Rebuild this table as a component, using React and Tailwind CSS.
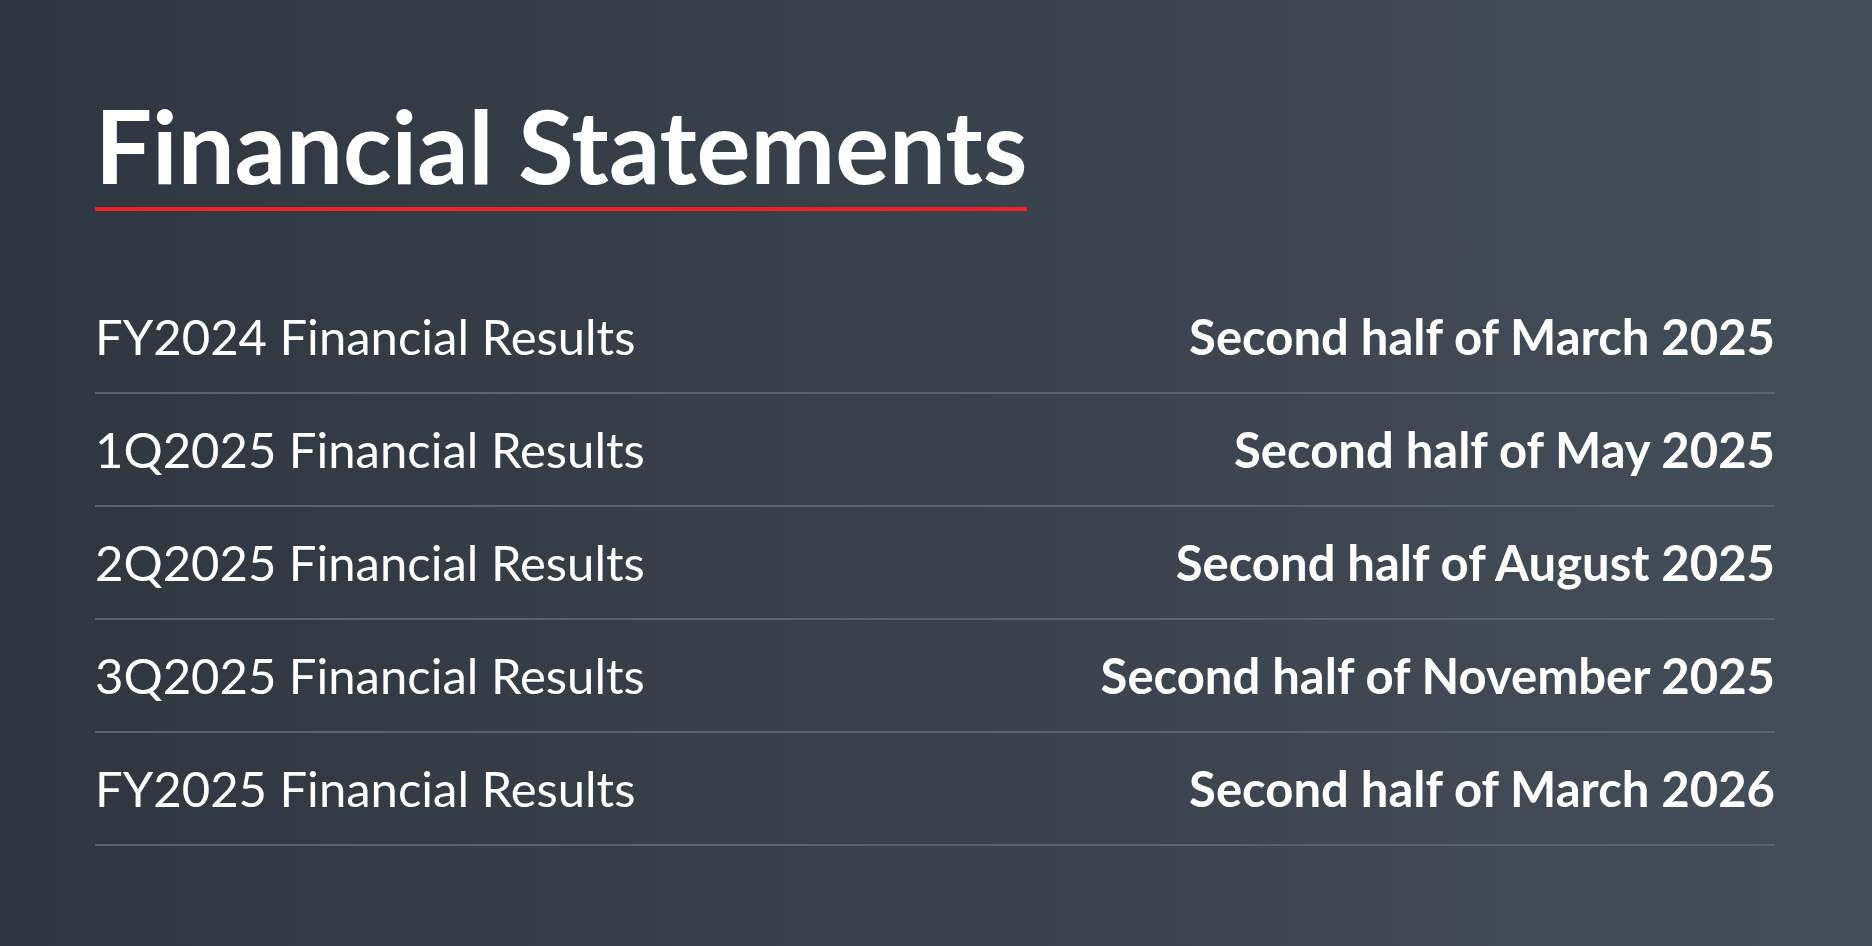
const rows = [
  ['FY2024 Financial Results', 'Second half of March 2025'],
  ['1Q2025 Financial Results', 'Second half of May 2025'],
  ['2Q2025 Financial Results', 'Second half of August 2025'],
  ['3Q2025 Financial Results', 'Second half of November 2025'],
  ['FY2025 Financial Results', 'Second half of March 2026'],
];

export default function App() {
  return (
    <div className="min-h-screen w-full bg-gradient-to-r from-[#2f363f] to-[#444e59] text-white font-['Lato',sans-serif]">
      <div className="pl-[95px] pr-[97px] pt-[95px]">
        <div className="inline-block">
          <h1 className="text-[101px] font-bold leading-none pb-[11px]">Financial Statements</h1>
          <div className="h-[4px] bg-[#ee2226]" />
        </div>

        <div className="mt-[70px]">
          {rows.map(([name, date]) => (
            <div key={name} className="flex items-center justify-between h-[113px] border-b-2 border-[#5a6470]">
              <span className="text-[49px] font-normal leading-none">{name}</span>
              <span className="text-[49px] font-bold leading-none">{date}</span>
            </div>
          ))}
        </div>
      </div>
    </div>
  );
}
